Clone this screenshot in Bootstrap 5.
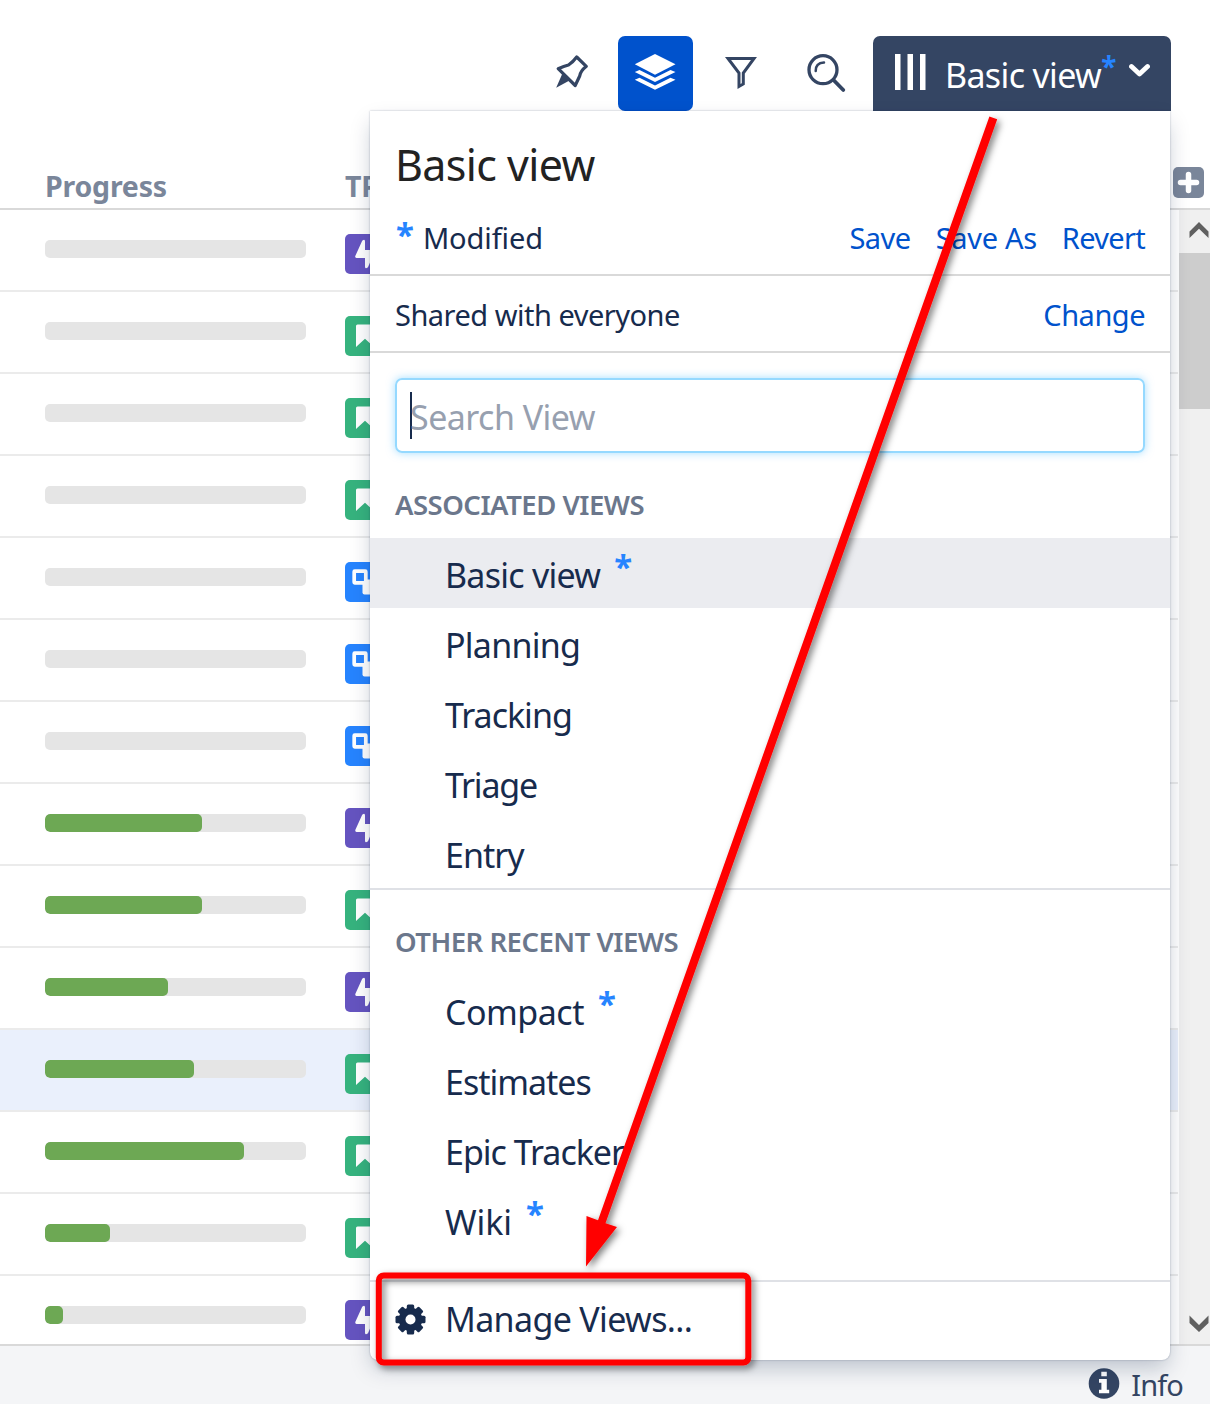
<!DOCTYPE html>
<html lang="en">
<head>
<meta charset="utf-8">
<meta name="viewport" content="width=device-width, initial-scale=1">
<title>Basic view</title>
<link href="https://cdn.jsdelivr.net/npm/bootstrap@5.3.0/dist/css/bootstrap.min.css" rel="stylesheet">
<style>
body{font-family:"Noto Sans","Open Sans",sans-serif;color:#172b4d;background:#fff}
.app{width:1210px;height:1404px}
svg{display:block;flex:none}
.toolbar-top{height:111px;padding:36px 39px 0 0;gap:10px}
.tool{width:75px;height:75px;border-radius:7px;color:#344563}
.tool.on{background:#0052cc;color:#fff}
.view-btn{width:298px;height:75px;border-radius:7px 7px 0 0;background:#344563;color:#fff;font-size:34px;line-height:40px;letter-spacing:-.65px;padding:0 21px 0 22px}
.view-btn .bars{margin-bottom:3px}
.view-btn .label{padding:3px 0 0 18px}
.view-btn .star{font-size:28px;padding-bottom:16px}
.star{font-weight:700;color:#2684ff;letter-spacing:0;line-height:1}
.thead-bar{height:99px;border-bottom:2px solid #d9d9d9;font-size:28.5px;font-weight:700;color:#7a869a;line-height:38px;padding:56px 6px 0 45px;letter-spacing:-.2px}
.thead-bar .c1{width:300px}
.grid-body{height:1134px}
.rows-pane{padding-right:1px}
.issue-row{height:82px;border-bottom:2px solid #ebebeb;padding-left:45px}
.issue-row.picked{background:#eaf0fc}
.track{width:261px;height:18px;border-radius:5px;background:#e5e5e5;margin:30px 39px 0 0}
.track .progress-bar{background:#6da854;border-radius:5px}
.issue-row svg{margin-top:24px}
.scroller{width:31px;background:#f0f0f0;padding-left:0}
.thumb{height:156px;background:#cdcdcd}
.foot{height:60px;border-top:2px solid #d9d9d9;background:#f4f5f7;color:#344563;font-size:29px;line-height:40px;letter-spacing:-.9px;padding:19px 27px 0 0;gap:11px}
.views-menu{left:370px;top:111px;width:800px;height:1249px;background:#fff;border-radius:0 0 8px 8px;box-shadow:0 10px 22px -3px rgba(9,30,66,.25),0 0 2px rgba(9,30,66,.33)}
.views-menu h2{margin:0;height:80px;padding:27px 0 0 25px;font-size:43px;line-height:54px;font-weight:400;letter-spacing:-.6px;color:#222}
.strip{border-bottom:2px solid #d9d9d9;padding:0 25px;font-size:29px;line-height:40px}
.strip.mod{height:85px;padding-top:27px}
.strip.share{height:77px;padding-top:19px}
.strip a{color:#0052cc;text-decoration:none}
.strip .star{font-size:33px;height:40px;line-height:34px;margin-right:9px;padding-left:1px}
.strip .links{gap:25px}
.find{height:75px;margin:25px 25px 0;border:2px solid #95d9ff;border-radius:7px;box-shadow:0 0 9px rgba(76,190,255,.5);padding:0 13px;font-size:34px;letter-spacing:-.54px;color:#97a0af}
.find .caret{width:2px;height:47px;background:#172b4d;margin-right:-2px}
.find .hint{line-height:40px;padding-top:3px}
.group-title{height:85px;margin:0;padding:32px 25px 0;font-size:27.5px;line-height:40px;font-weight:600;color:#6b778c;letter-spacing:-.5px}
.view-item{height:70px;padding:4px 0 0 75px;font-size:34px;line-height:40px;letter-spacing:-.75px}
.view-item.current{background:#ebecf0}
.view-item .star{font-size:33px;margin-left:14px;padding-bottom:17px}
.recent{height:392px;border-top:2px solid #dfe1e6}
.manage{height:80px;border-top:2px solid #dfe1e6;padding:0 0 4px 25px;font-size:34px;line-height:40px;letter-spacing:-.65px}
.manage span{padding-left:19px}
.ls-0{letter-spacing:-.1px}.ls-1{letter-spacing:-.1px}.ls-3{letter-spacing:-.3px}.ls-5{letter-spacing:-.5px}.ls-7{letter-spacing:-.7px}.ls-9{letter-spacing:-1px}.ls-13{letter-spacing:-1.2px}
.callout-layer{left:0;top:0;pointer-events:none}
</style>
<script src="https://cdn.jsdelivr.net/npm/bootstrap@5.3.0/dist/js/bootstrap.bundle.min.js"></script>
</head>
<body>
<svg width="0" height="0" class="position-absolute">
  <symbol id="epic" viewBox="0 0 40 40"><rect width="40" height="40" rx="5" fill="#6554c0"/><path d="M17.200 6.800Q20 4.600 20 7.500V16h8.500q2 0 1 2l-6.500 15.200q-2.800 2.400-3-.5V24h-8.500q-1.800-.3-1.200-2z" fill="#fff"/></symbol>
  <symbol id="story" viewBox="0 0 40 40"><rect width="40" height="40" rx="5" fill="#36b37e"/><path d="M11 10q0-1.500 1.500-1.500h15q1.500 0 1.500 1.500v21l-9-8.300L11 31z" fill="#fff"/></symbol>
  <symbol id="sub" viewBox="0 0 40 40"><rect width="40" height="40" rx="5" fill="#2684ff"/><rect x="17.500" y="17.500" width="15" height="15" rx="2" fill="#fff"/><rect x="9.200" y="9.200" width="11.600" height="11.600" rx=".5" fill="#2684ff" stroke="#fff" stroke-width="3.700"/></symbol>
</svg>
<div class="app position-relative overflow-hidden d-flex flex-column">
  <header class="toolbar-top d-flex justify-content-end flex-shrink-0">
    <div class="tool"><svg width="75" height="75" fill="none" stroke="currentColor" stroke-width="3.200" stroke-linejoin="round"><path d="M43.700 21L53.300 30.300Q47.500 35 46.700 40L42.200 49.500L25.200 32.700Q31 30 35.500 29Q40 26 43.700 21z"/><path d="M29.500 37.300L36.500 44.500L23.200 51.800z" fill="currentColor" stroke="none"/></svg></div>
    <div class="tool on"><svg width="75" height="75" fill="currentColor"><path d="M37 18L57.500 28.200L37 38.700L16.800 28.200z"/><path d="M16.800 36L21.500 34L37 41.700L52.500 34L57.500 36L37 46z"/><path d="M16.800 43.700L21.500 41.700L37 49.500L52.500 41.700L57.500 43.700L37 53.800z"/></svg></div>
    <div class="tool"><svg width="75" height="75" fill="none" stroke="currentColor" stroke-width="3"><path d="M25 22.500H51L40.300 37V48L36 50.500V37z"/></svg></div>
    <div class="tool"><svg width="75" height="75" fill="none" stroke="currentColor" stroke-width="3.300" stroke-linecap="round"><circle cx="35" cy="33.700" r="14"/><path d="M27.700 35Q27.500 27 36 26.500" stroke-width="2.500"/><path d="M45.500 44L55.300 54" stroke-width="3.800"/></svg></div>
    <div class="view-btn d-flex align-items-center">
      <svg class="bars" width="32" height="36" fill="#fff"><path d="M0 0h5.500v36h-5.500zM12.500 0h5.500v36h-5.500zM25 0h5.500v36h-5.500z"/></svg>
      <span class="label">Basic view</span><span class="star">*</span>
      <svg class="ms-auto" width="21" height="26" fill="none" stroke="#fff" stroke-width="4.800" stroke-linecap="round" stroke-linejoin="round"><path d="M2.500 5.500L10.500 13L18.500 5.500"/></svg>
    </div>
  </header>
  <div class="thead-bar d-flex flex-shrink-0">
    <div class="c1">Progress</div><div>TP</div>
    <svg class="ms-auto" width="31" height="31"><rect width="31" height="31" rx="5" fill="#7a869a"/><path d="M15.500 7.500v16M7.500 15.500h16" stroke="#fff" stroke-width="5.500" stroke-linecap="round"/></svg>
  </div>
  <main class="grid-body d-flex flex-shrink-0 overflow-hidden">
    <div class="rows-pane flex-grow-1" id="rows"></div>
    <div class="scroller d-flex flex-column">
      <svg width="31" height="43"><path d="M20 12L29.500 21.500V28L20 18.800L10.500 28V21.500z" fill="#606060"/></svg>
      <div class="thumb"></div>
      <svg class="mt-auto" width="31" height="43"><path d="M20 31L29.500 22V14.500L20 24L10.500 14.500V22z" fill="#606060"/></svg>
    </div>
  </main>
  <footer class="foot d-flex justify-content-end flex-shrink-0">
    <svg width="32" height="40"><circle cx="16" cy="18.500" r="15.300" fill="#344563"/><path d="M13.300 6.700h5.500v4.600h-5.500zM11 14h7.800v10.700h2.400v3.600H11v-3.600h2.400v-7H11z" fill="#fff"/></svg>
    <span>Info</span>
  </footer>

  <section class="views-menu position-absolute">
    <h2>Basic view</h2>
    <div class="strip mod d-flex">
      <span class="star">*</span><span class="ls-0">Modified</span>
      <div class="links ms-auto d-flex"><a href="#" class="ls-5">Save</a><a href="#" class="ls-3">Save As</a><a href="#" class="ls-7">Revert</a></div>
    </div>
    <div class="strip share d-flex justify-content-between ls-5"><span>Shared with everyone</span><a href="#">Change</a></div>
    <div class="find d-flex align-items-center"><span class="caret"></span><span class="hint">Search View</span></div>
    <h6 class="group-title">ASSOCIATED VIEWS</h6>
    <div class="view-item current d-flex align-items-center">Basic view<span class="star">*</span></div>
    <div class="view-item d-flex align-items-center">Planning</div>
    <div class="view-item d-flex align-items-center ls-9">Tracking</div>
    <div class="view-item d-flex align-items-center ls-13">Triage</div>
    <div class="view-item d-flex align-items-center ls-9">Entry</div>
    <div class="recent">
      <h6 class="group-title">OTHER RECENT VIEWS</h6>
      <div class="view-item d-flex align-items-center ls-5">Compact<span class="star">*</span></div>
      <div class="view-item d-flex align-items-center ls-9">Estimates</div>
      <div class="view-item d-flex align-items-center ls-9">Epic Tracker</div>
      <div class="view-item d-flex align-items-center ls-1">Wiki<span class="star">*</span></div>
    </div>
    <div class="manage d-flex align-items-center">
      <svg width="31" height="31" viewBox="-15.500 -15.500 31 31" fill="#172b4d"><circle r="11.800"/><g id="teeth"><rect x="-3.700" y="-15" width="7.400" height="30" rx="1.500"/><rect x="-15" y="-3.700" width="30" height="7.400" rx="1.500"/></g><use href="#teeth" transform="rotate(45)"/><circle r="5" fill="#fff"/></svg>
      <span>Manage Views...</span>
    </div>
  </section>

  <svg class="callout-layer position-absolute" width="1210" height="1404">
    <defs><filter id="sh" filterUnits="userSpaceOnUse" x="0" y="0" width="1210" height="1404"><feDropShadow dx="3" dy="3" stdDeviation="3.500" flood-color="#000" flood-opacity=".5"/></filter></defs>
    <g filter="url(#sh)"><path d="M989.400 116.500L997.200 119.200L605.500 1223.300L617 1227L586 1266.500L586.500 1216L598 1220.300z" fill="#f00"/></g>
    <rect x="378.800" y="1275.500" width="369.500" height="87" rx="5" fill="none" stroke="#f00" stroke-width="6" filter="url(#sh)"/>
  </svg>
</div>
<script>
const issues=[["epic",0],["story",0],["story",0],["story",0],["sub",0],["sub",0],["sub",0],["epic",157],["story",157],["epic",123],["story",149,1],["story",199],["story",65],["epic",18]];
document.getElementById("rows").innerHTML=issues.map(([k,w,p])=>`<div class="issue-row d-flex align-items-start${p?" picked":""}"><div class="progress track"><div class="progress-bar" style="width:${(w/2.61).toFixed(2)}%"></div></div><svg width="40" height="40"><use href="#${k}"/></svg></div>`).join("");
</script>
</body>
</html>
